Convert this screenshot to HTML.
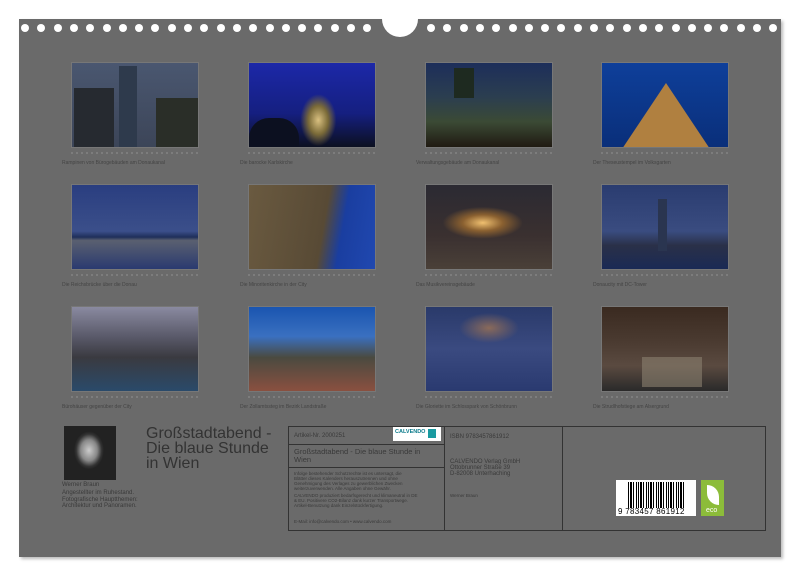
<!DOCTYPE html>
<html><head><meta charset="utf-8"><style>
*{margin:0;padding:0;box-sizing:border-box}
body{width:800px;height:577px;background:#fff;position:relative;overflow:hidden;font-family:"Liberation Sans",sans-serif}
#pg{position:absolute;left:19px;top:19px;width:762px;height:538px;background:#6a6a6a;box-shadow:2px 2px 3px #bbb}
.hole{position:absolute;top:24px;width:8px;height:8px;border-radius:50%;background:#fff}
.big{position:absolute;left:382px;top:1px;width:36px;height:36px;border-radius:50%;background:#fff}
.ph{position:absolute;width:128px;height:86px;border:1px solid #777;overflow:hidden}
.ph i{position:absolute;display:block}
.dt{position:absolute;height:2px;width:128px;background:repeating-linear-gradient(90deg,#8a8a8a 0 2px,transparent 2px 5px);opacity:.6}
.cap{position:absolute;font-size:5px;color:#444;white-space:nowrap}
.t{position:absolute;color:#3a3a3a}
</style></head><body>
<div id="pg"></div>
<div class="big"></div>
<div id="holes"></div>
<script>
var h='';for(var i=0;i<22;i++){h+='<div class="hole" style="left:'+(21+i*16.3).toFixed(1)+'px"></div>';}
for(var i=0;i<22;i++){h+='<div class="hole" style="left:'+(427+i*16.3).toFixed(1)+'px"></div>';}
document.getElementById('holes').innerHTML=h;
</script>
<!-- row1 -->
<div class="ph" style="left:71px;top:62px;background:linear-gradient(180deg,#4a5770 0%,#3c4558 100%)"><i style="left:2px;top:25px;width:40px;height:61px;background:#262a30"></i><i style="left:47px;top:3px;width:18px;height:83px;background:#2e3a4c"></i><i style="left:84px;top:35px;width:44px;height:51px;background:#2a2e28"></i></div>
<div class="ph" style="left:248px;top:62px;background:radial-gradient(ellipse 18px 26px at 55% 68%,#d9c080 0%,#7a6a38 55%,transparent 100%),linear-gradient(180deg,#1c28a8 0%,#151f80 60%,#0c1020 100%)"><i style="left:0;top:55px;width:50px;height:31px;background:#0c1020;border-radius:20px 20px 0 0"></i></div>
<div class="ph" style="left:425px;top:62px;background:linear-gradient(180deg,#1d2e5a 0%,#2b3e50 40%,#3b4a35 70%,#201a12 100%)"><i style="left:28px;top:5px;width:20px;height:30px;background:#1e2a20"></i></div>
<div class="ph" style="left:601px;top:62px;background:linear-gradient(180deg,#0e3f9a 0%,#0a2f7a 100%)"><i style="left:20px;top:20px;width:0;height:0;border-left:44px solid transparent;border-right:44px solid transparent;border-bottom:66px solid #b08040"></i></div>
<!-- row2 -->
<div class="ph" style="left:71px;top:184px;background:linear-gradient(180deg,#2a3e80 0%,#3b4f8a 55%,#1f2f5a 62%,#5a6070 66%,#2a3a70 100%)"></div>
<div class="ph" style="left:248px;top:184px;background:linear-gradient(100deg,#6a5a40 0%,#584a35 58%,#1a3ea0 72%,#2048b0 100%)"></div>
<div class="ph" style="left:425px;top:184px;background:radial-gradient(ellipse 40px 16px at 45% 45%,#f0c070 0%,#8a6030 50%,transparent 100%),linear-gradient(180deg,#2b2a32 0%,#3a3030 60%,#4a4038 100%)"></div>
<div class="ph" style="left:601px;top:184px;background:linear-gradient(180deg,#2a3c70 0%,#3a4c80 55%,#2a3048 72%,#1a2a55 100%)"><i style="left:56px;top:14px;width:9px;height:52px;background:#2a3550"></i></div>
<!-- row3 -->
<div class="ph" style="left:71px;top:306px;background:linear-gradient(180deg,#8a8aa0 0%,#5a5a6a 35%,#3a3a40 60%,#2a4a6a 100%)"></div>
<div class="ph" style="left:248px;top:306px;background:linear-gradient(180deg,#1a55b0 0%,#3a70c0 35%,#4a4a40 60%,#8a5040 100%)"></div>
<div class="ph" style="left:425px;top:306px;background:radial-gradient(ellipse 30px 15px at 50% 25%,#8a6a5a 0%,transparent 100%),linear-gradient(180deg,#2a3a6a 0%,#3a4a80 50%,#2a3a70 100%)"></div>
<div class="ph" style="left:601px;top:306px;background:linear-gradient(180deg,#3a2a20 0%,#4a3a30 40%,#5a4a40 70%,#2a2a2a 100%)"><i style="left:40px;top:50px;width:60px;height:30px;background:#8a8070;opacity:.6"></i></div>
<div class="dt" style="left:71px;top:152px"></div><div class="dt" style="left:248px;top:152px"></div><div class="dt" style="left:425px;top:152px"></div><div class="dt" style="left:601px;top:152px"></div>
<div class="dt" style="left:71px;top:274px"></div><div class="dt" style="left:248px;top:274px"></div><div class="dt" style="left:425px;top:274px"></div><div class="dt" style="left:601px;top:274px"></div>
<div class="dt" style="left:71px;top:396px"></div><div class="dt" style="left:248px;top:396px"></div><div class="dt" style="left:425px;top:396px"></div><div class="dt" style="left:601px;top:396px"></div>
<div class="cap" style="left:62px;top:160px">Rampinen von Bürogebäuden am Donaukanal</div>
<div class="cap" style="left:240px;top:160px">Die barocke Karlskirche</div>
<div class="cap" style="left:416px;top:160px">Verwaltungsgebäude am Donaukanal</div>
<div class="cap" style="left:593px;top:160px">Der Theseustempel im Volksgarten</div>
<div class="cap" style="left:62px;top:282px">Die Reichsbrücke über die Donau</div>
<div class="cap" style="left:240px;top:282px">Die Minoritenkirche in der City</div>
<div class="cap" style="left:416px;top:282px">Das Musikvereinsgebäude</div>
<div class="cap" style="left:593px;top:282px">Donaucity mit DC-Tower</div>
<div class="cap" style="left:62px;top:404px">Bürohäuser gegenüber der City</div>
<div class="cap" style="left:240px;top:404px">Der Zollamtssteg im Bezirk Landstraße</div>
<div class="cap" style="left:416px;top:404px">Die Gloriette im Schlosspark von Schönbrunn</div>
<div class="cap" style="left:593px;top:404px">Die Strudlhofstiege am Alsergrund</div>
<!-- bottom -->
<div style="position:absolute;left:64px;top:426px;width:52px;height:54px;background:radial-gradient(ellipse 15px 19px at 48% 45%,#ccc 0%,#888 55%,#333 85%,#222 100%)"></div>
<div class="t" style="left:62px;top:482px;font-size:6px">Werner Braun</div>
<div class="t" style="left:62px;top:490px;font-size:6px;line-height:6.5px">Angestellter im Ruhestand.<br>Fotografische Hauptthemen:<br>Architektur und Panoramen.</div>
<div class="t" style="left:146px;top:426px;font-size:16px;line-height:15px;color:#333">Großstadtabend -<br>Die blaue Stunde<br>in Wien</div>
<div style="position:absolute;left:288px;top:426px;width:478px;height:105px;border:1px solid #333"></div>
<div style="position:absolute;left:444px;top:426px;width:1px;height:105px;background:#333"></div>
<div style="position:absolute;left:562px;top:426px;width:1px;height:105px;background:#333"></div>
<div style="position:absolute;left:288px;top:444px;width:156px;height:1px;background:#333"></div>
<div style="position:absolute;left:288px;top:467px;width:156px;height:1px;background:#333"></div>
<div class="t" style="left:294px;top:433px;font-size:6px">Artikel-Nr. 2000251</div>
<div style="position:absolute;left:393px;top:427px;width:48px;height:14px;background:#fff"><span style="position:absolute;left:2px;top:2px;font-size:5.5px;color:#0a7a8a;font-weight:bold">CALVENDO</span><span style="position:absolute;left:35px;top:2px;width:8px;height:9px;background:#1a9aa0"></span></div>
<div class="t" style="left:294px;top:448px;font-size:7.5px;line-height:7.5px">Großstadtabend - Die blaue Stunde in<br>Wien</div>
<div class="t" style="left:294px;top:471px;font-size:4.5px;line-height:5px">Infolge bestehender Schutzrechte ist es untersagt, die<br>Blätter dieses Kalenders herauszutrennen und ohne<br>Genehmigung des Verlages zu gewerblichen Zwecken<br>weiterzuverwenden. Alle Angaben ohne Gewähr.</div>
<div class="t" style="left:294px;top:493px;font-size:4.5px;line-height:5px">CALVENDO produziert bedarfsgerecht und klimaneutral in DE<br>&amp; EU. Positivere CO2-Bilanz dank kurzer Transportwege.<br>Artikel-Benutzung dank Einzelstückfertigung.</div>
<div class="t" style="left:294px;top:519px;font-size:4.5px">E-Mail: info@calvendo.com • www.calvendo.com</div>
<div class="t" style="left:450px;top:434px;font-size:6px">ISBN 9783457861912</div>
<div class="t" style="left:450px;top:459px;font-size:6px;line-height:6px">CALVENDO Verlag GmbH<br>Ottobrunner Straße 39<br>D-82008 Unterhaching</div>
<div class="t" style="left:450px;top:493px;font-size:4.5px">Werner Braun</div>
<div style="position:absolute;left:616px;top:480px;width:80px;height:36px;background:#fff">
<div style="position:absolute;left:12px;top:2px;width:58px;height:26px;background:repeating-linear-gradient(90deg,#000 0 1px,#fff 1px 2px,#000 2px 4px,#fff 4px 5px,#000 5px 6px,#fff 6px 8px,#000 8px 9px,#fff 9px 10px)"></div>
<span style="position:absolute;left:2px;top:27px;font-size:8px;color:#000;letter-spacing:.3px">9 783457 861912</span></div>
<div style="position:absolute;left:701px;top:480px;width:23px;height:36px;background:#8cbc3a"><span style="position:absolute;left:6px;top:5px;width:12px;height:20px;background:#fff;border-radius:0 12px 0 12px"></span><span style="position:absolute;left:5px;top:27px;font-size:7px;color:#fff">eco</span></div>
</body></html>
